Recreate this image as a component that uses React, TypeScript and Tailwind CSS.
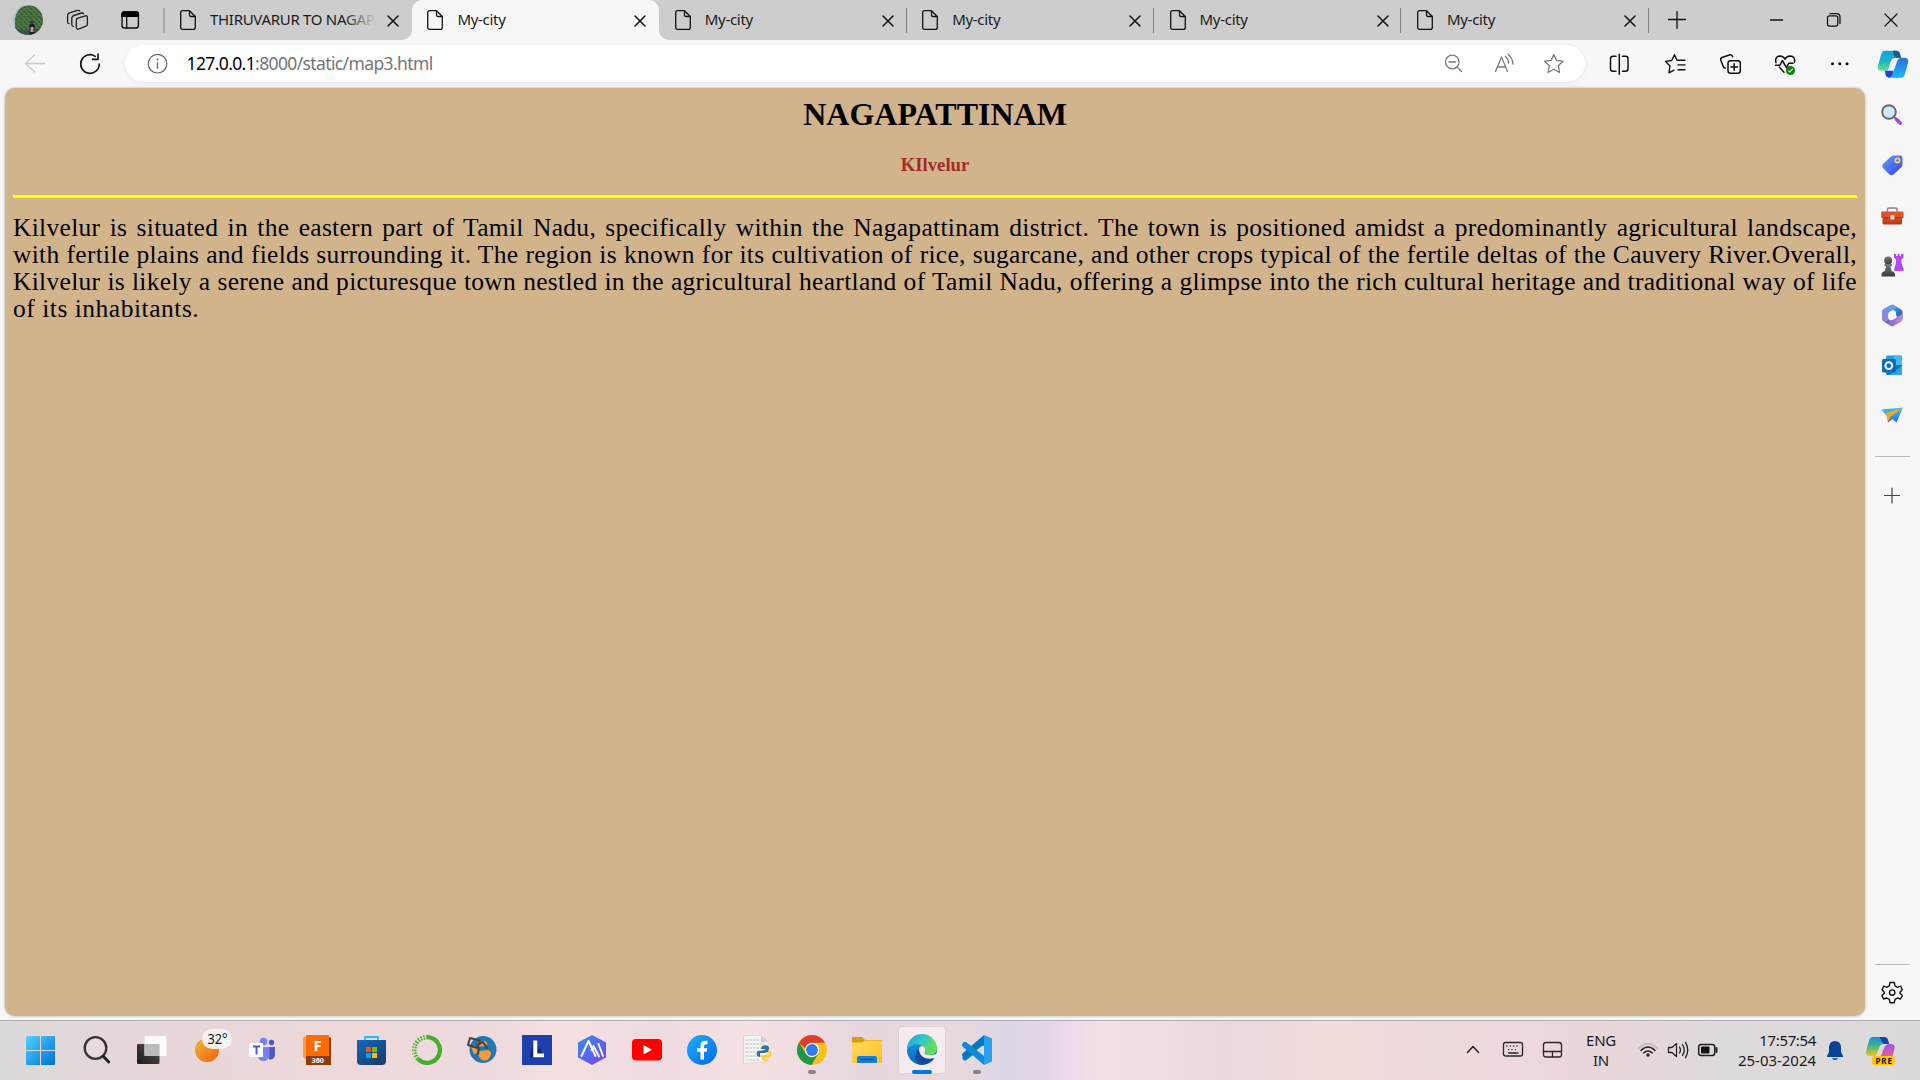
import React from "react";

type P = { x: number; y: number; w: number; h: number; children?: React.ReactNode };

/* A slot of window space; its drawing uses window coordinates. */
function Slot({ x, y, w, h, children }: P) {
  return (
    <svg className="block shrink-0" width={w} height={h} viewBox={`${x} ${y} ${w} ${h}`} fill="none" strokeLinecap="round" strokeLinejoin="round">
      {children}
    </svg>
  );
}

const FileIcon = () => (
  <svg className="block shrink-0" width="16" height="20" viewBox="0 0 16 20" fill="none" stroke="#111" strokeWidth="1.3" strokeLinejoin="round">
    <path d="M2.6 .7H9.5L15.3 6.5V17.4Q15.3 19.3 13.4 19.3H2.6Q.7 19.3 .7 17.4V2.6Q.7 .7 2.6 .7Z" />
    <path d="M9.5 .9V5Q9.5 6.5 11 6.5H15.2" />
  </svg>
);

const CloseIcon = () => (
  <svg className="block shrink-0" width="12" height="12" viewBox="0 0 12 12" stroke="#111" strokeWidth="1.5" strokeLinecap="round">
    <path d="M1 1 11 11M11 1 1 11" />
  </svg>
);

function Tab({ title, active, divider, fade }: { title: string; active?: boolean; divider?: boolean; fade?: boolean }) {
  return (
    <div className={"relative flex h-10 w-[247.4px] shrink-0 items-center pl-[15.5px] " + (active ? "rounded-t-[10px] bg-[#f7f7f7]" : "")}>
      {active && (
        <>
          <svg className="absolute -left-[10px] bottom-0" width="10" height="10"><path d="M10 0V10H0A10 10 0 0 0 10 0Z" fill="#f7f7f7" /></svg>
          <svg className="absolute -right-[10px] bottom-0" width="10" height="10"><path d="M0 0V10H10A10 10 0 0 1 0 0Z" fill="#f7f7f7" /></svg>
        </>
      )}
      <FileIcon />
      <div className="relative mb-[2px] ml-[14px] w-[166px] overflow-hidden whitespace-nowrap text-[15px] leading-5 tracking-[-0.3px] text-[#1b1b1b]">
        {title}
        {fade && <span className="absolute inset-y-0 right-0 w-8 bg-linear-to-r from-transparent to-[#cdcdcd]" />}
      </div>
      <div className="ml-[11px] mt-px"><CloseIcon /></div>
      {divider && <span className="ml-auto h-[25px] w-px bg-[#808080]" />}
    </div>
  );
}

function TabBar() {
  return (
    <div className="flex h-10 bg-[#cdcdcd]">
      <Slot x={0} y={0} w={164.5} h={40}>
        <defs>
          <clipPath id="av"><circle cx="28" cy="20" r="15" /></clipPath>
          <pattern id="leaf" width="5" height="5" patternUnits="userSpaceOnUse">
            <path d="M0 1h1M3 0h1M2 3h1M4 4h1" stroke="#628a58" strokeWidth="1" />
            <path d="M1 4h1M4 2h1" stroke="#2b4f2b" strokeWidth="1" />
          </pattern>
        </defs>
        <g clipPath="url(#av)">
          <rect x="13" y="5" width="30" height="30" fill="#a9c1cf" />
          <path d="M15 35V20Q17 5.500 29 5.500Q42 6 43 20V35Z" fill="#41693b" />
          <path d="M15 35V20Q17 5.500 29 5.500Q42 6 43 20V35Z" fill="url(#leaf)" />
          <path d="M13 28Q28 33 43 28V36H13Z" fill="#3d4f42" />
          <path d="M29.500 35V25Q30 23.500 32 23.500T34.500 25V35Z" fill="#171c35" />
          <circle cx="32" cy="22" r="1.500" fill="#4a2d24" />
          <path d="M30.500 27h3v5h-3z" fill="#c49b82" />
        </g>
        <g stroke="#222" strokeWidth="1.350">
          <path d="M78 18.200 85.500 15.800Q87.400 15.400 87.400 17.400V24Q87.400 25.600 86 26.200L79 28.900Q76.500 29.600 76.300 27.200V20.500Q76.300 18.800 78 18.200Z" />
          <path d="M73.300 26.400Q71.800 26.300 71.800 24.500V18Q72 16.200 73.800 15.500L81.500 13Q83.300 12.800 83.600 13.700" />
          <path d="M69 23.600Q67.600 23.300 67.600 21.700V15.300Q67.800 13.500 69.500 12.900L77.500 10.400Q79.300 10.200 79.700 11" />
        </g>
        <rect x="122" y="12" width="16.400" height="16" rx="2.500" stroke="#111" strokeWidth="1.400" />
        <path d="M121.300 17V14Q121.500 11.300 124 11.300H136.500Q139 11.300 139.100 14V17Z" fill="#000" />
        <path d="M126.700 17V28" stroke="#111" strokeWidth="1.300" />
        <path d="M164 8.500V32.500" stroke="#808080" />
      </Slot>
      <Tab title="THIRUVARUR TO NAGAPATTINAM" fade />
      <Tab title="My-city" active />
      <Tab title="My-city" divider />
      <Tab title="My-city" divider />
      <Tab title="My-city" divider />
      <Tab title="My-city" divider />
      <Slot x={1649} y={0} w={271} h={40}>
        <g stroke="#111" strokeWidth="1.3">
          <path d="M1668.500 19.500H1685.500M1677 11.500V28.500" />
          <path d="M1770.500 20H1782.500" />
          <rect x="1827.500" y="15.800" width="10.300" height="10.300" rx="2" />
          <path d="M1830 13.600H1836.500Q1840 13.600 1840 17V23.500" />
          <path d="M1885 14 1897 26M1897 14 1885 26" strokeWidth="1.200" />
        </g>
      </Slot>
    </div>
  );
}

function Toolbar() {
  return (
    <div className="flex h-12 items-center bg-[#f7f7f7] pb-px">
      <Slot x={0} y={40} w={125} h={48}>
        <path d="M44.500 63.500H25.500M34.500 55 25.500 63.500 34.500 72" stroke="#cacaca" strokeWidth="1.300" />
        <path d="M95.200 56.300A9.300 9.300 0 1 0 99.300 64" stroke="#111" strokeWidth="1.600" />
        <path d="M98 54V59.400H92.500" stroke="#111" strokeWidth="1.600" />
      </Slot>
      <div className="flex h-[37px] w-[1460px] shrink-0 items-center rounded-full bg-white shadow-[0_1px_5px_rgba(0,0,0,0.07)]">
        <Slot x={125} y={45} w={61.5} h={37}>
          <circle cx="157.500" cy="63.700" r="9.300" stroke="#666" strokeWidth="1.200" />
          <path d="M157.500 62.700V68.200" stroke="#666" strokeWidth="1.300" />
          <circle cx="157.500" cy="59.500" r="1" fill="#666" />
        </Slot>
        <div className="mb-[2px] grow whitespace-nowrap text-[17.5px] leading-6 tracking-[-0.62px] text-[#757575]"><span className="text-black">127.0.0.1</span>:8000/static/map3.html</div>
        <Slot x={1430} y={45.500} w={155} h={37}>
          <g stroke="#7a7a7a" strokeWidth="1.300">
            <circle cx="1452.300" cy="62.500" r="6.800" />
            <path d="M1457.200 67.600 1461.500 72M1449 62.500H1455.600" />
            <path d="M1495.500 72 1501.500 57.500 1507.500 72M1497.500 67.500H1505.500" />
            <path d="M1505.500 57Q1508.500 59.500 1508.600 63.500M1508 54.800Q1512.500 58.500 1513 64.500" />
            <path d="M1553.800 55 1556.400 60.800 1563 61.700 1558.300 66.200 1559.500 73 1553.800 69.800 1548.100 73 1549.300 66.200 1544.600 61.700 1551.200 60.800Z" />
          </g>
        </Slot>
      </div>
      <Slot x={1585} y={41.300} w={335} h={48}>
        <defs>
          <linearGradient id="cpa" x1="0" y1="0" x2="0" y2="1"><stop offset="0" stopColor="#17a5e0" /><stop offset=".5" stopColor="#18b0c4" /><stop offset="1" stopColor="#6be08c" /></linearGradient>
          <linearGradient id="cpb" x1="0" y1="0" x2="0" y2="1"><stop offset="0" stopColor="#2f6fd8" /><stop offset="1" stopColor="#16b6fb" /></linearGradient>
        </defs>
        <g stroke="#111" strokeWidth="1.500">
          <path d="M1616 57.500H1613Q1610.500 57.500 1610.500 60V70Q1610.500 72.500 1613 72.500H1616M1622.500 57.500H1625.500Q1628 57.500 1628 60V70Q1628 72.500 1625.500 72.500H1622.500M1619.300 55.500V75.500" />
          <path d="M1678.500 61.500H1677L1674.500 56 1671.700 61.800 1665.500 62.700 1670 67.200 1669 74.200 1674 71.500M1679.500 61.500H1685M1678 66.200H1685M1678 71H1685" strokeWidth="1.400" />
          <rect x="1728" y="62" width="12.300" height="12.500" rx="2.500" />
          <path d="M1734.200 65V71.500M1731 68.200H1737.500" />
          <path d="M1725 69.500Q1723.500 69 1723 67L1720.800 61.500Q1720.300 59.500 1722 58.800L1730 56Q1732 55.700 1732.700 58" />
          <path d="M1776 64Q1774.500 57.500 1780 57.300Q1783.300 57.500 1785 60.500Q1786.700 57.500 1790 57.300Q1795.500 57.500 1794.500 63.500M1775.500 66.500H1780L1782.300 61.800 1786.500 69 1788.800 64.500H1793M1779.500 68.500 1784 73.500" strokeWidth="1.500" />
        </g>
        <circle cx="1790.500" cy="71.800" r="4.600" fill="#107c10" />
        <path d="M1788.700 72.300 1790 73.300 1792.500 70.300" stroke="#fff" strokeWidth="1.100" />
        <g fill="#111"><circle cx="1832.500" cy="65" r="1.500" /><circle cx="1839.800" cy="65" r="1.500" /><circle cx="1847" cy="65" r="1.500" /></g>
        <g transform="translate(0 -1)">
          <path d="M1884 53H1896Q1899 53 1900 56L1901 60H1896Q1892 60 1890.500 64L1888 72Q1887.500 73 1886 73H1881Q1877 72.500 1878 68L1881 57Q1882 53.500 1884 53Z" fill="url(#cpa)" />
          <path d="M1893 53H1896.500Q1899 53 1900 56L1901 60H1896Q1893.500 59 1893 53Z" fill="#1a5b92" />
          <path d="M1901 60H1905Q1909 60.500 1908 65L1905 76Q1904 80 1901 80H1889Q1892 79 1893 75L1897 64Q1898 60.500 1901 60Z" fill="url(#cpb)" />
          <path d="M1885 73H1893.500L1892.500 77Q1891 80 1889 80Q1886 79.500 1885.500 76.500Z" fill="#1b47d0" />
        </g>
      </Slot>
    </div>
  );
}

const lines = [
  "Kilvelur is situated in the eastern part of Tamil Nadu, specifically within the Nagapattinam district. The town is positioned amidst a predominantly agricultural landscape,",
  "with fertile plains and fields surrounding it. The region is known for its cultivation of rice, sugarcane, and other crops typical of the fertile deltas of the Cauvery River.Overall,",
  "Kilvelur is likely a serene and picturesque town nestled in the agricultural heartland of Tamil Nadu, offering a glimpse into the rich cultural heritage and traditional way of life",
];

function Content() {
  return (
    <main className="h-[928px] w-[1860px] shrink-0 rounded-[10px] bg-[#d2b48c] px-2 font-['Liberation_Serif',serif] text-black shadow-[0_0_3px_rgba(0,0,0,0.3)]">
      <h1 className="pt-[8px] text-center text-[32px] font-bold leading-[37px]">NAGAPATTINAM</h1>
      <h2 className="mt-[22px] text-center text-[18.72px] font-bold leading-[20px] text-[#a52a2a]">KIlvelur</h2>
      <div className="mt-[20px] h-[3px] bg-[#ffff00]" />
      <div className="mt-[16px] text-[25.5px] leading-[27px] tracking-[0.3px]">
        {lines.map((l) => (
          <p key={l} className="whitespace-nowrap [text-align-last:justify] [word-spacing:-2px]">{l}</p>
        ))}
        <p className="tracking-[0.52px]">of its inhabitants.</p>
      </div>
    </main>
  );
}

function Sidebar() {
  return (
    <aside className="flex w-[55px] shrink-0 flex-col justify-between">
      <Slot x={1865} y={88} w={55} h={440}>
        <defs>
          <linearGradient id="tag" x1="0" y1="0" x2="1" y2="1"><stop stopColor="#5aa5f8" /><stop offset="1" stopColor="#3a3df0" /></linearGradient>
          <linearGradient id="box" x1="0" y1="0" x2="0" y2="1"><stop stopColor="#e0562a" /><stop offset="1" stopColor="#b93413" /></linearGradient>
          <linearGradient id="ma" x1="0" y1="1" x2="1" y2="0"><stop stopColor="#9b7be0" /><stop offset="1" stopColor="#55a8ee" /></linearGradient>
          <linearGradient id="mb" x1="0" y1="0" x2="1" y2="1"><stop stopColor="#48b4ea" /><stop offset="1" stopColor="#2a4fb0" /></linearGradient>
          <linearGradient id="mc" x1="0" y1="0" x2="1" y2="0"><stop stopColor="#6a63b8" /><stop offset="1" stopColor="#c08be0" /></linearGradient>
          <linearGradient id="pawn" x1="0" y1="0" x2="0" y2="1"><stop stopColor="#777" /><stop offset="1" stopColor="#3b3b3b" /></linearGradient>
          <linearGradient id="plane" x1="0" y1="0" x2="0" y2="1"><stop stopColor="#3ec2f5" /><stop offset="1" stopColor="#1f6fe0" /></linearGradient>
        </defs>
        <circle cx="1889" cy="112" r="6.800" fill="#cdeafd" stroke="#686868" strokeWidth="1.900" />
        <path d="M1893.500 116.500 1896 119" stroke="#777" strokeWidth="2" />
        <path d="M1896.500 119.500 1900.300 123" stroke="#b43fe8" strokeWidth="3.600" />
        <path d="M1891 156.500Q1892 155.500 1893.500 155.400H1900Q1902.500 155.500 1902.500 158V164Q1902.500 166 1901.500 167L1893.500 174.500Q1891.500 176 1889.500 174.500L1883 168Q1881.500 166 1883 164Z" fill="url(#tag)" />
        <circle cx="1897.500" cy="160.500" r="2.200" fill="#5870d8" stroke="#ffd83d" strokeWidth="1.700" />
        <path d="M1887.500 211V209.500Q1887.500 208 1889 208H1895.500Q1897 208 1897 209.500V211" stroke="#888" strokeWidth="1.500" />
        <rect x="1882.500" y="216" width="19.500" height="8.500" rx="1.500" fill="url(#box)" />
        <rect x="1881.200" y="211.500" width="22.300" height="6" rx="1" fill="#df552b" />
        <path d="M1882 217.700H1903" stroke="#8e2c10" strokeWidth=".8" />
        <rect x="1890.400" y="215" width="4" height="4.500" rx="1" fill="#d7d7d7" />
        <path d="M1894 254V257.500L1896 259.500V263L1894 269.500Q1894 271 1896 271H1903.500V269L1901.500 263V259.500L1903.500 257.500V254H1901V256H1899.500V254H1897.500V256H1896V254Z" fill="#b548f0" />
        <circle cx="1888.200" cy="260.500" r="4" fill="url(#pawn)" />
        <path d="M1884.500 264H1892V266H1890.500L1891.500 271Q1895 272 1895 274.500V276.500H1881.500V274.500Q1881.500 272 1885 271L1886 266H1884.500Z" fill="url(#pawn)" />
        <path d="M1892.500 304.500 1901 309.300Q1902.500 310.200 1902.500 312V319.500L1896 316V311.800L1888.500 307Z" fill="url(#mb)" />
        <path d="M1894 305.300Q1892.200 304 1890 305.300L1883.500 309Q1882 310 1882 311.500V319Q1882 321 1884 321.800L1888.500 319.500V312.500L1896.500 308Z" fill="url(#ma)" />
        <path d="M1884 321.800 1888.500 319.300 1891 320.500 1902.500 314V319Q1902.500 320.800 1901 321.800L1894 325.800Q1892.200 326.800 1890.500 325.800Z" fill="url(#mc)" />
        <circle cx="1892.200" cy="315.500" r="4" fill="#f7f7f7" />
        <rect x="1886" y="355.500" width="16" height="19.500" rx="1.500" fill="#2498dd" />
        <path d="M1894 355.500H1900.500Q1902 355.500 1902 357V365H1894Z" fill="#42b9f1" />
        <path d="M1886 365H1902V373.500L1901 375H1887Z" fill="#1770c1" />
        <path d="M1895 371 1902 366V374Q1902 375 1901 375H1889Z" fill="#28a8ea" />
        <rect x="1882" y="359" width="14" height="13.500" rx="1.500" fill="#0f6cbd" />
        <circle cx="1888.800" cy="365.700" r="3.400" stroke="#fff" strokeWidth="2" />
        <path d="M1881 409.500 1903 407.500 1896.500 422.500 1892.500 419 1888 422.500 1887.300 416Z" fill="url(#plane)" />
        <path d="M1884.500 413.500 1903 407.500 1890.500 417 1888 422 1886.500 416Z" fill="#f2a51d" />
        <path d="M1875 456.500H1910" stroke="#bdbdbd" strokeLinecap="butt" />
        <path d="M1884.500 495.500H1899.500M1892 488V503" stroke="#444" strokeWidth="1.200" />
      </Slot>
      <Slot x={1865} y={950} w={55} h={70}>
        <path d="M1875 964.500H1910" stroke="#bdbdbd" strokeLinecap="butt" />
        <path d="M1890 982.500H1894.300L1895 985.800 1897.500 987.300 1900.700 986.200 1902.300 989.700 1900 992.200V993.200L1902.300 995.600 1900.500 999 1897.500 998 1895 999.300 1894.300 1002.700H1890L1889.300 999.300 1886.800 998 1883.500 999 1882 995.600 1884.300 993.200V992.200L1882 989.700 1883.600 986.200 1886.800 987.300 1889.300 985.800Z" stroke="#111" strokeWidth="1.400" />
        <circle cx="1892.200" cy="992.600" r="2.700" stroke="#111" strokeWidth="1.400" />
      </Slot>
    </aside>
  );
}

function Defs() {
  return (
    <defs>
      <linearGradient id="win" x1="26" y1="36" x2="55" y2="65" gradientUnits="userSpaceOnUse"><stop stopColor="#4fd2ff" /><stop offset="1" stopColor="#0072d4" /></linearGradient>
      <linearGradient id="sun" x1="0" y1="0" x2="1" y2="1"><stop stopColor="#f0b93a" /><stop offset="1" stopColor="#f25d0a" /></linearGradient>
      <linearGradient id="dark" x1="0" y1="1" x2="1" y2="0"><stop stopColor="#1d1d1d" /><stop offset="1" stopColor="#555" /></linearGradient>
      <linearGradient id="store" x1="0" y1="0" x2="1" y2="1"><stop stopColor="#0c6bbd" /><stop offset="1" stopColor="#1f3864" /></linearGradient>
      <linearGradient id="hex" x1="0" y1="0" x2="1" y2="1"><stop stopColor="#3d8ee8" /><stop offset="1" stopColor="#7043f2" /></linearGradient>
      <linearGradient id="fb" x1="0" y1="0" x2="1" y2="1"><stop stopColor="#19b0ff" /><stop offset="1" stopColor="#0668e8" /></linearGradient>
      <linearGradient id="fold" x1="0" y1="0" x2="1" y2="1"><stop stopColor="#ffdc66" /><stop offset="1" stopColor="#fbbf22" /></linearGradient>
      <linearGradient id="edg" x1="0" y1="0" x2="1" y2=".5"><stop stopColor="#1d9fe0" /><stop offset=".5" stopColor="#35c6cc" /><stop offset="1" stopColor="#66e04e" /></linearGradient>
      <linearGradient id="edb" x1="0" y1="0" x2="0" y2="1"><stop stopColor="#1ba0e8" /><stop offset="1" stopColor="#0a65c0" /></linearGradient>
    </defs>
  );
}

const apps: React.ReactNode[] = [
  <><path d="M26 37Q26 36 27 36H40V50H26ZM41 36H54Q55 36 55 37V50H41ZM26 51H40V65H27Q26 65 26 64ZM41 51H55V64Q55 65 54 65H41Z" fill="url(#win)" /></>,
  <><circle cx="95.500" cy="48" r="10.800" stroke="#333" strokeWidth="2.300" fill="#ecdedd" fillOpacity=".6" /><path d="M103.500 56.500 108.700 62" stroke="#222" strokeWidth="3" /></>,
  <><rect x="137" y="44" width="22.500" height="20" rx="1" fill="url(#dark)" /><rect x="144.500" y="36" width="22" height="20" rx="1" fill="#fff" fillOpacity=".88" /><path d="M144.500 44H159.500V56H144.500Z" fill="#bbb" /></>,
  <><circle cx="207" cy="50" r="12" fill="url(#sun)" /><rect x="202" y="29" width="30" height="20" rx="10" fill="#f8f4f3" fillOpacity=".93" /><text x="207.500" y="44" fontSize="14.500" fill="#1a1a1a" textLength="20" lengthAdjust="spacingAndGlyphs">32°</text></>,
  <><circle cx="263.500" cy="41.500" r="3.800" fill="#7b83eb" /><circle cx="271.500" cy="42.500" r="2.700" fill="#5059c9" /><path d="M267 47H275V55Q274 60 269 59.500Z" fill="#5059c9" /><path d="M258 47H269.500V56Q268 61 263.500 61Q259 61 258 57Z" fill="#7b83eb" /><rect x="249" y="43" width="14" height="14" fill="#fff" /><path d="M253 46.500H260M256.500 46.500V54.500" stroke="#5059c9" strokeWidth="1.900" strokeLinecap="butt" /></>,
  <><path d="M303 37.500 309 35V62.500L303 57Z" fill="#ff9a4d" /><rect x="306" y="35" width="23" height="21" rx="1" fill="#ff6b00" /><path d="M306 56H329V37L331 38V65H306Z" fill="#8d3a05" /><text x="313.500" y="50.500" fontSize="15" fontWeight="bold" fill="#fff">F</text><text x="311.500" y="63" fontSize="6.500" fontWeight="bold" fill="#fff" textLength="12.500" lengthAdjust="spacingAndGlyphs">360</text></>,
  <><path d="M365 41V37H378V41" stroke="#20c0f5" strokeWidth="1.800" /><path d="M357 40H386V61Q386 65 382 65H361Q357 65 357 61Z" fill="url(#store)" /><path d="M366 47H371V52H366Z" fill="#f25022" /><path d="M372 47H377V52H372Z" fill="#7fba00" /><path d="M366 53H371V58H366Z" fill="#00a4ef" /><path d="M372 53H377V58H372Z" fill="#ffb900" /></>,
  <><path d="M427 37.200A12.800 12.800 0 1 1 418 59" stroke="#43b02a" strokeWidth="4.300" strokeLinecap="butt" /><path d="M418 59A12.800 12.800 0 0 1 427 37.200" stroke="#43b02a" strokeWidth="4.500" strokeDasharray="1.600 1.300" strokeLinecap="butt" /><path d="M415.500 58A14 14 0 0 1 426 37" stroke="#eadcdc" strokeWidth="1" strokeDasharray="1.500 2" /></>,
  <><circle cx="483" cy="49.500" r="13.500" fill="#2277b8" /><path d="M481 41Q488 40 487 45Q482 48 476 45ZM479 51 488 50Q493 52 490 57Q487 62 482 60Q477 57 479 51ZM471 47 477 48 478 53 474 54Z" fill="#f49b3c" /><path d="M470 38 480 40.500 477.500 48 468 45ZM477 45 483 42 487 48M479 48 478 54" stroke="#444" strokeWidth="2" /></>,
  <><rect x="522" y="35" width="30" height="30" fill="#1d3fb0" /><path d="M533 41 530 57.500H537L542 52Z" fill="#14295c" /><path d="M533.300 40.500H537.300V53.500H544V57.300H533.300Z" fill="#fff" /></>,
  <><path d="M592 35 606 42.500V57.500L592 65 578 57.500V42.500Z" fill="url(#hex)" /><path d="M581.500 56 588.500 41 595.500 56M591.500 50 593.500 46 599 56.500M598.500 44 603 56" stroke="#fff" strokeWidth="1.900" /></>,
  <><rect x="632" y="39" width="30" height="21.500" rx="4" fill="#f00" /><path d="M643.500 45 652 49.700 643.500 54.500Z" fill="#fff" /></>,
  <><circle cx="702" cy="50" r="15" fill="url(#fb)" /><path d="M700.500 59.500V51.800H697V48.200H700.500V45.500Q700.500 40.800 705 40.800H707.500V44.200H706Q704 44.200 704 46V48.200H707.300L706.700 51.800H704V59.500Z" fill="#fff" /></>,
  <><path d="M744 35.500H761L768 42V61.500L744 63.500Z" fill="#f4f4f2" stroke="#ccc" strokeWidth=".6" /><path d="M746 40H760M746 44H765M746 48H764M746 52H764M746 56H764M746 60H760" stroke="#c4c4c2" strokeWidth="1" strokeDasharray="2 1.600" /><path d="M761 35.500V42H768Z" fill="#ccc" /><path d="M762 46Q767 44 769 47V51.500L765 53H760V57Q755 56 757.500 51L765 50V49H761Z" fill="#3470a4" /><path d="M769 50Q773 52 770 57L763.500 58V59H767.500Q767 62 763 60.500L761.500 56 769 54.500Z" fill="#ffd140" stroke="#ffd140" /></>,
  <><circle cx="812" cy="50" r="15" fill="#fbc116" /><path d="M799 42.500A15 15 0 0 1 825 42.500L812 43Q806 43 805.500 49Z" fill="#e33b2e" /><path d="M799 42.500A15 15 0 0 0 811.500 65L818.500 53.500Q815 57.500 811 57Q807 56 805.500 53Z" fill="#229647" /><circle cx="812" cy="50" r="7.200" fill="#fff" /><circle cx="812" cy="50" r="5.900" fill="#2f7bf0" /><rect x="808" y="70" width="8" height="4" rx="2" fill="#8b8183" /></>,
  <><path d="M852 38Q852 37 853 37H862L865 40H881Q882 40 882 41V48H852Z" fill="#dc9c0b" /><path d="M852 42.500H862L865 40.500H882V63H852Z" fill="url(#fold)" /><path d="M857 63V58Q857 56 859 56H875Q877 56 877 58V63Z" fill="#1282d8" /><path d="M860.500 59.500H873.500" stroke="#0a529a" strokeWidth="1.300" /></>,
  <><rect x="898.500" y="26.500" width="47" height="47" rx="4" fill="#f5ebef" stroke="#ded1d6" /><circle cx="922" cy="50" r="15" fill="url(#edb)" /><path d="M907 49A15 15 0 0 1 937 49Q936.500 55 929 55Q924 55 924.500 52.500Q927 50 923.500 46.500Q916 41 907 49Z" fill="url(#edg)" /><path d="M919 48Q914 57 921 63Q926 66 934.500 57Q928 61 922.500 57.500Q917.500 54 919 48Z" fill="#114c9a" /><path d="M919 48Q921.500 44.500 924 47Q926.500 50 924.500 52.500Q924 55 929 55Q935 55.500 938 53L936 58Q928 61 922.500 57.500Q917.500 54 919 48Z" fill="#f5ebef" /><path d="M919 48Q912 57 918 64Q926 67 934.500 58Q927 60 922.500 56.500Q918.500 53 919 48Z" fill="#114c9a" /><rect x="912" y="70" width="20" height="4" rx="2" fill="#0078d7" /></>,
  <><path d="M984 43.500 965 58" stroke="#0a7cc8" strokeWidth="5" strokeDasharray="0 15 20" /><path d="M965 44.500 984 59.500" stroke="#1180cc" strokeWidth="5" /><path d="M984 35V44.500L966.500 57.500Q964.500 58.500 963 57Q961 55 963 53Z" fill="#0877bd" /><path d="M984 65V56L966.500 42.500Q964.500 41.500 963 43Q961 45 963 47Z" fill="#0b8bd9" /><path d="M984 35 992 38.500V61.500L984 65Z" fill="#26a2ef" /><rect x="973" y="70" width="8" height="4" rx="2" fill="#8b8183" /></>,
];

function Taskbar() {
  return (
    <footer className="flex h-[60px] border-t border-[#b3adaf] bg-[linear-gradient(90deg,#dbd9d9_0px,#e6d7d8_140px,#eed8da_340px,#eedbde_500px,#f6e0e2_560px,#eedbdf_660px,#f6e1e3_750px,#e6d7df_860px,#e7dade_960px,#ddd5e7_1010px,#e3d6e9_1045px,#efd8ee_1067px,#f3dfe6_1100px,#f2dfe1_1140px,#e9d8dc_1220px,#f4dbdb_1330px,#eed9db_1440px,#f0d9dc_1490px,#e8d6d9_1600px,#dedadb_1720px,#dbd9da_1920px)] text-[#1b1b1b]">
      <div className="flex pl-[14px]">
        {apps.map((a, i) => (
          <Slot key={i} x={14 + 55 * i} y={21} w={55} h={59}>
            {i === 0 && <Defs />}
            {a}
          </Slot>
        ))}
      </div>
      <div className="ml-auto flex">
        <Slot x={1455} y={1021} w={120} h={59}>
          <path d="M1467.500 1052.500 1473 1046.500 1478.500 1052.500" stroke="#222" strokeWidth="1.500" />
          <g stroke="#2a2728" strokeWidth="1.300">
            <rect x="1503.500" y="1042.500" width="19" height="13.500" rx="2" />
            <rect x="1543.500" y="1042.500" width="18" height="14.500" rx="2.500" />
            <path d="M1543.500 1051.500H1561.500M1552.500 1051.500V1057M1508.500 1053H1518" />
          </g>
          <g stroke="#2a2728" strokeWidth="1.400" strokeDasharray="0.100 3.300"><path d="M1506.800 1046H1520" /><path d="M1508.500 1049.600H1518" /></g>
        </Slot>
        <div className="flex h-[58px] w-[52px] flex-col items-center justify-center text-[15px] leading-5 tracking-[-0.3px]"><span>ENG</span><span>IN</span></div>
        <Slot x={1627} y={1021} w={100} h={59}>
          <g stroke="#222" strokeWidth="1.500">
            <path d="M1639 1048Q1648 1039 1657 1048" stroke="#bdb2b5" />
            <path d="M1641 1050.500Q1648 1043.500 1655 1050.500M1643.700 1053Q1648 1049 1652.300 1053" />
            <path d="M1668.500 1047.500H1672L1676.500 1043.500V1056.500L1672 1052.500H1668.500Z" strokeWidth="1.300" />
            <path d="M1679.500 1047Q1681.500 1050 1679.500 1053M1682.500 1044.500Q1686 1050 1682.500 1055.500M1685.500 1042.300Q1690 1050 1685.500 1057.700" strokeWidth="1.300" />
            <rect x="1698.700" y="1044.500" width="16" height="11" rx="2.500" />
          </g>
          <circle cx="1648" cy="1055" r="1.700" fill="#222" />
          <rect x="1701" y="1046.500" width="8.500" height="7" rx="1" fill="#111" />
          <path d="M1716.500 1048V1052" stroke="#222" strokeWidth="2" />
        </Slot>
        <div className="flex h-[57px] w-[89px] flex-col items-end justify-center whitespace-nowrap text-[15px] leading-5"><span className="tracking-[-0.35px]">17:57:54</span><span className="tracking-[-0.03px]">25-03-2024</span></div>
        <Slot x={1816} y={1021} w={104} h={59}>
          <defs><linearGradient id="pra" x1="0" y1="0" x2="0" y2="1"><stop stopColor="#1687e8" /><stop offset=".5" stopColor="#48b878" /><stop offset="1" stopColor="#f2c21a" /></linearGradient><linearGradient id="prb" x1="0" y1="0" x2="0" y2="1"><stop stopColor="#9d55e8" /><stop offset="1" stopColor="#f0608a" /></linearGradient></defs>
          <path d="M1827 1056 1829 1052V1047Q1829.500 1041 1835 1041T1841 1047V1052L1843 1056V1057H1827Z" fill="#0a4298" />
          <path d="M1832 1058.300H1838Q1837.500 1060 1835 1060T1832 1058.300Z" fill="#0a4298" />
          <path d="M1873 1037H1884Q1887 1037 1888 1040L1889 1044H1884Q1880 1044 1879 1048L1876 1056H1870Q1865 1056 1866 1051L1869 1041Q1870 1037 1873 1037Z" fill="url(#pra)" />
          <path d="M1880 1037H1884Q1887 1037 1888 1040L1889 1044H1884Q1881 1042 1880 1037Z" fill="#1a3fae" />
          <path d="M1889 1044H1892Q1895.500 1045 1894.500 1049L1892 1058H1880L1884 1048Q1885.500 1044.500 1889 1044Z" fill="url(#prb)" />
          <rect x="1872" y="1056" width="23" height="9.500" rx="3" fill="#ffc60a" />
          <text x="1875.500" y="1063.700" fontSize="8" fontWeight="bold" fill="#111" textLength="16.500">PRE</text>
        </Slot>
      </div>
    </footer>
  );
}

export default function App() {
  return (
    <div className="flex h-[1080px] w-[1920px] flex-col overflow-hidden bg-[#f7f7f7] font-['Noto_Sans','Open_Sans',sans-serif]">
      <TabBar />
      <Toolbar />
      <div className="flex h-[932px] shrink-0 pl-[5px]">
        <Content />
        <Sidebar />
      </div>
      <Taskbar />
    </div>
  );
}
